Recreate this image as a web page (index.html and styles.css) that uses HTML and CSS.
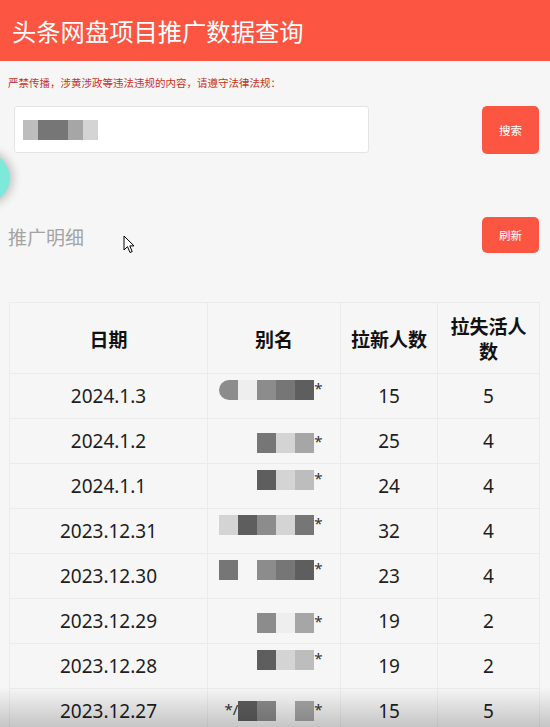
FILE: index.html
```html
<!DOCTYPE html>
<html lang="zh-CN">
<head>
<meta charset="utf-8">
<title>头条网盘项目推广数据查询</title>
<link rel="stylesheet" href="styles.css">
</head>
<body>
<header class="topbar"><h1 class="title">头条网盘项目推广数据查询</h1></header>
<main class="page">
  <p class="warning">严禁传播，涉黄涉政等违法违规的内容，请遵守法律法规：</p>
  <div class="search-row">
    <div class="input"><span class="blur"><i class="s6"></i><i class="s3"></i><i class="s3"></i><i class="s5"></i><i class="s7"></i></span></div>
    <button class="btn btn-search">搜索</button>
  </div>
  <div class="section-row">
    <h2 class="section-title">推广明细</h2>
    <button class="btn btn-refresh">刷新</button>
  </div>
  <table class="data">
    <colgroup><col class="c1"><col class="c2"><col class="c3"><col class="c4"></colgroup>
    <thead>
      <tr><th>日期</th><th>别名</th><th>拉新人数</th><th>拉失活人<br>数</th></tr>
    </thead>
    <tbody>
      <tr><td>2024.1.3</td><td><span class="alias"><i class="s4 round"></i><i class="s8"></i><i class="s4"></i><i class="s3"></i><i class="s2"></i><b>*</b></span></td><td>15</td><td>5</td></tr>
      <tr><td>2024.1.2</td><td><span class="alias low"><i class="s9"></i><i class="s9"></i><i class="s3"></i><i class="s7"></i><i class="s5"></i><b>*</b></span></td><td>25</td><td>4</td></tr>
      <tr><td>2024.1.1</td><td><span class="alias"><i class="s9"></i><i class="s9"></i><i class="s2"></i><i class="s7"></i><i class="s6"></i><b>*</b></span></td><td>24</td><td>4</td></tr>
      <tr><td>2023.12.31</td><td><span class="alias"><i class="s7"></i><i class="s2"></i><i class="s4"></i><i class="s7"></i><i class="s3"></i><b>*</b></span></td><td>32</td><td>4</td></tr>
      <tr><td>2023.12.30</td><td><span class="alias"><i class="s3"></i><i class="s9"></i><i class="s4"></i><i class="s3"></i><i class="s2"></i><b>*</b></span></td><td>23</td><td>4</td></tr>
      <tr><td>2023.12.29</td><td><span class="alias low"><i class="s9"></i><i class="s9"></i><i class="s4"></i><i class="s8"></i><i class="s5"></i><b>*</b></span></td><td>19</td><td>2</td></tr>
      <tr><td>2023.12.28</td><td><span class="alias"><i class="s9"></i><i class="s9"></i><i class="s2"></i><i class="s7"></i><i class="s6"></i><b>*</b></span></td><td>19</td><td>2</td></tr>
      <tr><td>2023.12.27</td><td><span class="alias"><b class="lead">*/</b><i class="s2"></i><i class="s4"></i><i class="s9"></i><i class="s5"></i><b>*</b></span></td><td>15</td><td>5</td></tr>
    </tbody>
  </table>
</main>
<div class="float-ball"></div>
<svg class="cursor" width="12" height="19" viewBox="0 0 12 19"><path d="M1 1 L1 15 L4.5 11.6 L7 17.5 L9.2 16.6 L6.8 10.9 L11 10.9 Z" fill="#fff" stroke="#000" stroke-width="1" stroke-linejoin="round"/></svg>
<div class="bottom-shade"></div>
</body>
</html>
```

FILE: styles.css
```css
html, body {
  margin: 0;
  padding: 0;
  overflow: hidden;
  height: 727px;
}
body {
  background: #f6f6f6;
  font-family: "Noto Sans", "Noto Sans CJK SC", sans-serif;
  color: #222;
  position: relative;
}
.topbar {
  height: 61px;
  background: #fc5542;
  display: flex;
  align-items: center;
  padding-left: 12px;
}
.title {
  margin: 0;
  font-family: "Noto Sans CJK SC", sans-serif;
  font-weight: 400;
  font-size: 24.3px;
  color: #fff;
}
.page {
  padding: 0 11px 0 8px;
}
.warning {
  margin: 15px 0 0;
  font-family: "Noto Sans CJK SC", sans-serif;
  font-size: 10.5px;
  line-height: 14px;
  color: #c9321f;
}
.search-row {
  margin-top: 16px;
  display: flex;
  justify-content: space-between;
  align-items: flex-start;
}
.input {
  margin-left: 6px;
  width: 345px;
  height: 45px;
  background: #fff;
  border: 1px solid #e4e4e4;
  border-radius: 3px;
  display: flex;
  align-items: center;
  padding-left: 8px;
}
.input .blur {
  display: flex;
  height: 20px;
}
.input .blur i {
  width: 15px;
  height: 20px;
}
.btn {
  border: 0;
  background: #fc5542;
  color: #fff;
  font-family: "Noto Sans CJK SC", sans-serif;
  font-size: 11.5px;
  border-radius: 5px;
  padding: 0;
}
.btn-search {
  width: 57px;
  height: 48px;
}
.section-row {
  margin-top: 63px;
  display: flex;
  justify-content: space-between;
  align-items: center;
  height: 36px;
}
.section-title {
  margin: 2px 0 0;
  font-family: "Noto Sans CJK SC", sans-serif;
  font-weight: 400;
  font-size: 19px;
  color: #a3a3a3;
}
.btn-refresh {
  width: 57px;
  height: 36px;
}
.data {
  margin-top: 49px;
  margin-left: 1px;
  width: 530px;
  border-collapse: collapse;
  table-layout: fixed;
  background: #f6f6f6;
}
.c1 { width: 198px; }
.c2 { width: 133px; }
.c3 { width: 97px; }
.c4 { width: 102px; }
.data th, .data td {
  border: 1px solid #ebebeb;
  text-align: center;
  padding: 0;
}
.data th {
  height: 70px;
  font-family: "Noto Sans CJK SC", sans-serif;
  font-size: 19px;
  line-height: 25px;
  font-weight: 700;
  color: #111;
}
.data td {
  height: 44px;
  font-size: 19px;
  color: #1e1e1e;
}
.alias {
  display: inline-flex;
  align-items: flex-start;
  height: 20px;
  margin-left: -6px;
  transform: translateY(-3px);
}
.alias.low {
  transform: translateY(5px);
}
.alias i {
  width: 19px;
  height: 20px;
}
.alias b {
  font-weight: 400;
  font-size: 15px;
  color: #333;
  line-height: 16px;
}
.alias b.lead {
  width: 19px;
  text-align: right;
}
.round { border-radius: 10px 0 0 10px; }
.s2 { background: #5e5e5e; }
.s3 { background: #767676; }
.s4 { background: #8c8c8c; }
.s5 { background: #a6a6a6; }
.s6 { background: #bdbdbd; }
.s7 { background: #d4d4d4; }
.s8 { background: #eeeeee; }
.s9 { background: transparent; }
.float-ball {
  position: absolute;
  left: -40px;
  top: 153px;
  width: 50px;
  height: 50px;
  border-radius: 50%;
  background: #7de9da;
  box-shadow: 0 0 10px 3px rgba(0, 0, 0, 0.22);
}
.cursor {
  position: absolute;
  left: 123px;
  top: 235px;
}
.bottom-shade {
  position: absolute;
  left: 0;
  right: 0;
  bottom: 0;
  height: 40px;
  background: linear-gradient(to bottom, rgba(0, 0, 0, 0), rgba(0, 0, 0, 0.2));
  pointer-events: none;
}
```
